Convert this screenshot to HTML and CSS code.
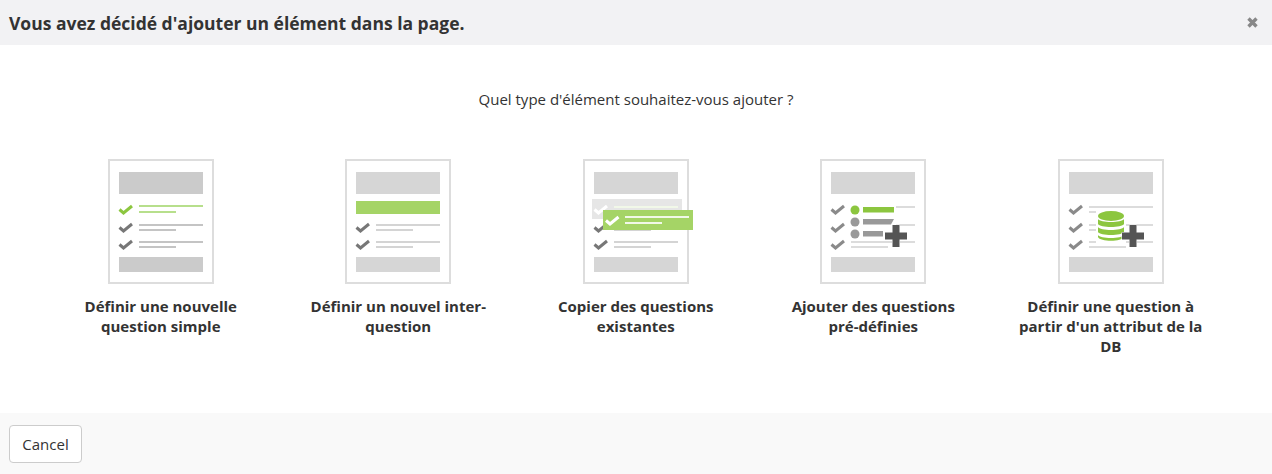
FILE: index.html
```html
<!DOCTYPE html>
<html lang="fr">
<head>
    <meta charset="UTF-8">
    <meta name="viewport" content="width=device-width, initial-scale=1.0">
    <title>Ajouter un élément</title>
    <link rel="stylesheet" href="styles.css">
</head>
<body>
    <svg class="defs" width="0" height="0" aria-hidden="true">
        <defs>
            <path id="check" d="M0 4.5 L4 8 L12.5 1" fill="none" stroke-width="3"/>
            <g id="sheet">
                <rect class="sheet" x="1" y="1" width="104" height="123"/>
                <rect class="block" x="11" y="13" width="84" height="22"/>
                <rect class="block" x="11" y="98" width="84" height="15"/>
            </g>
            <g id="row">
                <use href="#check" class="tick" x="11.5" y="0"/>
                <rect class="line" x="31" y="1" width="64" height="2"/>
                <rect class="line" x="31" y="6" width="37" height="2"/>
            </g>
            <path id="plus" d="M-3.5 -11 H3.5 V-3.5 H11 V3.5 H3.5 V11 H-3.5 V3.5 H-11 V-3.5 H-3.5 Z"/>
        </defs>
    </svg>

    <header class="modal-head">
        <h1>Vous avez décidé d'ajouter un élément dans la page.</h1>
        <svg class="close" width="11" height="11" viewBox="0 0 11 11" aria-label="Fermer">
            <path d="M1.5 1.5 L9.5 9.5 M9.5 1.5 L1.5 9.5"/>
        </svg>
    </header>

    <main class="modal-body">
        <p class="question">Quel type d'élément souhaitez-vous ajouter ?</p>

        <div class="choices">
            <div class="choice">
                <svg class="thumb thumb-dark" width="106" height="125" viewBox="0 0 106 125">
                    <use href="#sheet"/>
                    <g transform="translate(0 46)">
                        <use href="#check" class="tick-green" x="11.5" y="0"/>
                        <rect class="line-green" x="31" y="0" width="64" height="2"/>
                        <rect class="line-green" x="31" y="6" width="37" height="2"/>
                    </g>
                    <use href="#row" y="64"/>
                    <use href="#row" y="81"/>
                </svg>
                <div class="label">Définir une nouvelle question simple</div>
            </div>

            <div class="choice">
                <svg class="thumb" width="106" height="125" viewBox="0 0 106 125">
                    <use href="#sheet"/>
                    <rect class="band" x="11" y="42" width="84" height="13"/>
                    <use href="#row" y="64"/>
                    <use href="#row" y="81"/>
                </svg>
                <div class="label">Définir un nouvel inter-question</div>
            </div>

            <div class="choice">
                <svg class="thumb" width="106" height="125" viewBox="0 0 106 125">
                    <use href="#sheet"/>
                    <use href="#row" y="64"/>
                    <use href="#row" y="81"/>
                    <rect class="ghost" x="9" y="40" width="90" height="20"/>
                    <use href="#check" class="tick-white" x="11.5" y="46"/>
                    <rect class="line-white" x="31" y="47" width="64" height="2"/>
                    <rect class="band" x="20" y="51" width="90" height="20"/>
                    <use href="#check" class="tick-white" x="23" y="57"/>
                    <rect class="line-white" x="42" y="57" width="64" height="2"/>
                    <rect class="line-white" x="42" y="63" width="37" height="2"/>
                </svg>
                <div class="label">Copier des questions existantes</div>
            </div>

            <div class="choice">
                <svg class="thumb thumb-light" width="106" height="125" viewBox="0 0 106 125">
                    <use href="#sheet"/>
                    <use href="#row" y="46"/>
                    <use href="#row" y="64"/>
                    <use href="#row" y="81"/>
                    <rect class="sheet-fill" x="29" y="44" width="47" height="37"/>
                    <circle class="dot-green" cx="35" cy="51" r="4.5"/>
                    <rect class="dot-green" x="43" y="48" width="31" height="5.5"/>
                    <circle class="dot-grey" cx="35" cy="63" r="4.5"/>
                    <path class="dot-grey" d="M43 60 H74 L71 65.5 H43 Z"/>
                    <circle class="dot-grey" cx="35" cy="75" r="4.5"/>
                    <rect class="dot-grey" x="43" y="72" width="20" height="5.5"/>
                    <use href="#plus" class="plus" x="76" y="77"/>
                </svg>
                <div class="label">Ajouter des questions pré-définies</div>
            </div>

            <div class="choice">
                <svg class="thumb thumb-light" width="106" height="125" viewBox="0 0 106 125">
                    <use href="#sheet"/>
                    <use href="#row" y="46"/>
                    <use href="#row" y="64"/>
                    <use href="#row" y="81"/>
                    <rect class="sheet-fill" x="38" y="50" width="30" height="34"/>
                    <ellipse class="dot-green" cx="53" cy="57" rx="13" ry="5"/>
                    <path class="dot-green" d="M40 60 C42 64 64 64 66 60 V65 C64 69 42 69 40 65 Z"/>
                    <path class="dot-green" d="M40 68 C42 72 64 72 66 68 V73 C64 77 42 77 40 73 Z"/>
                    <path class="dot-green" d="M40 76 C42 80 64 80 66 76 V78 C64 83 42 83 40 78 Z"/>
                    <use href="#plus" class="plus" x="75" y="77"/>
                </svg>
                <div class="label">Définir une question à partir d'un attribut de la DB</div>
            </div>
        </div>
    </main>

    <footer class="modal-foot">
        <button class="btn" type="button">Cancel</button>
    </footer>
</body>
</html>
```

FILE: styles.css
```css
* {
    box-sizing: border-box;
}
html, body {
    height: 100%;
}
body {
    margin: 0;
    display: flex;
    flex-direction: column;
    font-family: "Open Sans", Arial, sans-serif;
    font-size: 15px;
    line-height: 20px;
    color: #333;
    background-color: #fff;
    overflow: hidden;
}
.defs {
    position: absolute;
}
.modal-head {
    height: 45px;
    flex: none;
    display: flex;
    align-items: center;
    justify-content: space-between;
    padding: 0 14px 0 9px;
    background-color: #f2f2f4;
}
.modal-head h1 {
    margin: 0;
    font-size: 17.5px;
    font-weight: 700;
}
.close {
    fill: none;
    stroke: #888;
    stroke-width: 3.4;
}
.modal-body {
    flex: 1;
    padding-top: 44px;
    text-align: center;
}
.question {
    margin: 0;
}
.choices {
    display: grid;
    grid-template-columns: repeat(5, 1fr);
    margin-top: 50px;
    padding: 0 42.5px 0 42px;
}
.choice {
    padding: 0 24px;
    font-weight: 700;
}
.thumb {
    display: block;
    margin: 0 auto 12px;
    overflow: visible;
    filter: blur(0.3px);
}
.thumb-dark {
    --block: #cbcbcb;
    --line: #c4c4c4;
}
.thumb-light {
    --tick: #8a8a8a;
    --line: #dcdcdc;
}
.sheet {
    fill: #fff;
    stroke: #ddd;
    stroke-width: 2;
}
.sheet-fill {
    fill: #fff;
}
.block {
    fill: var(--block, #d6d6d6);
}
.line {
    fill: var(--line, #d4d4d4);
}
.line-green {
    fill: #b7df8c;
}
.line-white {
    fill: #f1f8e8;
}
.tick {
    stroke: var(--tick, #777);
}
.tick-green {
    stroke: #8cc63f;
}
.tick-white {
    stroke: #fff;
}
.band {
    fill: #a5d466;
}
.ghost {
    fill: #e6e6e6;
}
.dot-green {
    fill: #8cc63f;
}
.dot-grey {
    fill: #999;
}
.plus {
    fill: #555;
    stroke: #fff;
    stroke-width: 1;
    paint-order: stroke;
}
.modal-foot {
    height: 61px;
    flex: none;
    padding: 12px 9px;
    background-color: #f9f9f9;
}
.btn {
    height: 38px;
    width: 73px;
    padding: 0;
    border: 1px solid #ccc;
    border-radius: 4px;
    background-color: #fff;
    color: #333;
    font-family: inherit;
    font-size: 15px;
}
```
